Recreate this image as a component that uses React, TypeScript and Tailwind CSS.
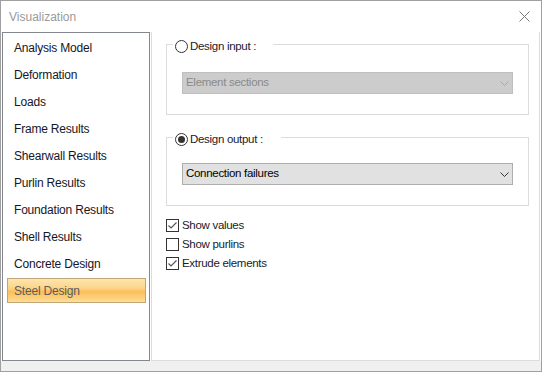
import { useState } from "react"

const items = [
  "Analysis Model",
  "Deformation",
  "Loads",
  "Frame Results",
  "Shearwall Results",
  "Purlin Results",
  "Foundation Results",
  "Shell Results",
  "Concrete Design",
  "Steel Design",
]

function Radio({ checked }: { checked: boolean }) {
  return (
    <span className="flex h-[13px] w-[13px] items-center justify-center rounded-full border border-[#333] bg-white">
      {checked && <span className="h-[7px] w-[7px] rounded-full bg-[#333]" />}
    </span>
  )
}

function Chevron({ color }: { color: string }) {
  return (
    <svg width="9" height="5" viewBox="0 0 9 5" className="mr-[3px]">
      <path d="M0.5 0.5 L4.5 4.5 L8.5 0.5" fill="none" stroke={color} strokeWidth="1" />
    </svg>
  )
}

function Check({ checked, label }: { checked: boolean; label: string }) {
  return (
    <div className="flex h-[19px] items-center">
      <span className="flex h-[13px] w-[13px] items-center justify-center border border-[#333] bg-white">
        {checked && (
          <svg width="11" height="11" viewBox="0 0 11 11">
            <path d="M1.5 5.5 L4 8 L9.5 2.5" fill="none" stroke="#555" strokeWidth="1.2" />
          </svg>
        )}
      </span>
      <span className="ml-[3px] text-[11.5px] tracking-[-0.3px] text-[#1a1a2a]">{label}</span>
    </div>
  )
}

export default function App() {
  const [selected, setSelected] = useState("Steel Design")

  return (
    <div
      className="flex h-[372px] w-[542px] flex-col border border-[#a0a0a0] bg-[#f0f0f0]"
      style={{ fontFamily: '"Liberation Sans", Arial, sans-serif' }}
    >
      <div className="flex h-[31px] items-center justify-between bg-white pl-[8px] pr-[11px]">
        <span className="text-[12px] text-[#999]">Visualization</span>
        <svg width="11" height="11" viewBox="0 0 11 11">
          <path d="M0.5 0.5 L10.5 10.5 M10.5 0.5 L0.5 10.5" stroke="#777" strokeWidth="1" />
        </svg>
      </div>

      <div className="flex h-[329px] bg-white pl-[1px]">
        <div className="w-[148px] border border-[#828790] bg-white pt-[2px]">
          {items.map((name) => {
            const active = name === selected
            return (
              <div key={name} className="h-[27px] pl-[4px]" onClick={() => setSelected(name)}>
                <div
                  className={
                    active
                      ? "flex h-[25px] w-[139px] items-center border border-[#c2a574] bg-[linear-gradient(#fde6ae_0%,#fcd489_40%,#fbbf58_55%,#fcd281_85%,#fde0a0_100%)] pl-[6px] text-[12px] tracking-[-0.2px] text-[#5c5c5c]"
                      : "flex h-[25px] w-[139px] items-center border border-transparent pl-[6px] text-[12px] tracking-[-0.2px] text-[#161626]"
                  }
                >
                  {name}
                </div>
              </div>
            )
          })}
        </div>

        <div className="ml-[1px] w-[389px] border-x border-b border-[#dcdcdc] bg-white pl-[14px] pt-[2px]">
          <fieldset className="m-0 w-[363px] border border-[#dcdcdc] px-[6px] pb-[20px]">
            <legend className="flex w-[100px] items-center pb-[1px] pl-[2px] pt-[6px]">
              <Radio checked={false} />
              <span className="ml-[2px] text-[11.5px] leading-[13px] tracking-[-0.3px] text-[#1a1a2a]">Design input :</span>
            </legend>
            <div className="ml-[9px] mt-[18px] flex h-[22px] w-[331px] items-center justify-between border border-[#bfbfbf] bg-[#cccccc] pl-[3px] text-[11.5px] tracking-[-0.3px] text-[#8a8a8a]">
              <span>Element sections</span>
              <Chevron color="#a8a8a8" />
            </div>
          </fieldset>

          <fieldset className="m-0 mt-[12px] w-[363px] border border-[#dcdcdc] px-[6px] pb-[20px]">
            <legend className="flex w-[108px] items-center pb-[1px] pl-[2px] pt-[6px]">
              <Radio checked={true} />
              <span className="ml-[2px] text-[11.5px] leading-[13px] tracking-[-0.3px] text-[#1a1a2a]">Design output :</span>
            </legend>
            <div className="ml-[9px] mt-[16px] flex h-[22px] w-[331px] items-center justify-between border border-[#adadad] bg-[#e1e1e1] pl-[3px] text-[11.5px] tracking-[-0.3px] text-black">
              <span>Connection failures</span>
              <Chevron color="#333" />
            </div>
          </fieldset>

          <div className="mt-[10px]">
            <Check checked={true} label="Show values" />
            <Check checked={false} label="Show purlins" />
            <Check checked={true} label="Extrude elements" />
          </div>
        </div>
      </div>

      <div className="h-[10px] bg-[#f0f0f0]" />
    </div>
  )
}
